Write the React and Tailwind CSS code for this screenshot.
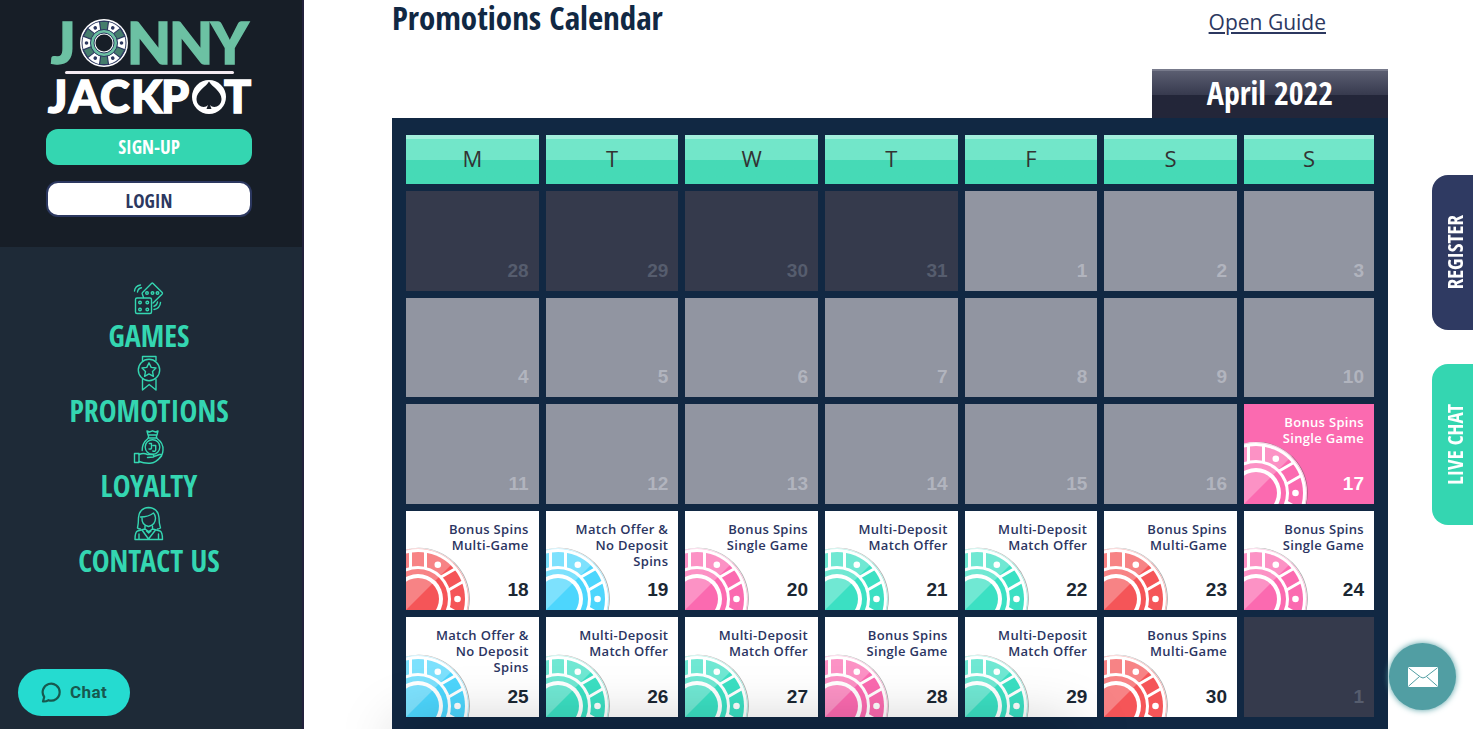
import React from 'react';

const CHIP_COLORS = {
  red: '#f55558',
  blue: '#4dd6fd',
  pink: '#fb6ab0',
  green: '#3be0c3',
};

const OFFERS = {
  single: { lines: ['Bonus Spins', 'Single Game'], chip: 'pink' },
  multi: { lines: ['Bonus Spins', 'Multi-Game'], chip: 'red' },
  match: { lines: ['Match Offer &', 'No Deposit', 'Spins'], chip: 'blue' },
  deposit: { lines: ['Multi-Deposit', 'Match Offer'], chip: 'green' },
};

const WEEKDAYS = ['M', 'T', 'W', 'T', 'F', 'S', 'S'];

const outside = n => ({ n, type: 'outside' });
const past = n => ({ n, type: 'past' });
const open = (n, offer) => ({ n, type: 'open', offer });

const WEEKS = [
  [outside(28), outside(29), outside(30), outside(31), past(1), past(2), past(3)],
  [past(4), past(5), past(6), past(7), past(8), past(9), past(10)],
  [past(11), past(12), past(13), past(14), past(15), past(16), { n: 17, type: 'today', offer: 'single' }],
  [open(18, 'multi'), open(19, 'match'), open(20, 'single'), open(21, 'deposit'), open(22, 'deposit'), open(23, 'multi'), open(24, 'single')],
  [open(25, 'match'), open(26, 'deposit'), open(27, 'deposit'), open(28, 'single'), open(29, 'deposit'), open(30, 'multi'), outside(1)],
];

const CELL_STYLES = {
  outside: 'bg-[#353a4c] text-[#565d6e]',
  past: 'bg-[#9195a1] text-[#b1b4be]',
  today: 'bg-[#fb6ab0] text-white',
  open: 'bg-white text-[#1b2733]',
};

function Chip({ color }) {
  const fill = CHIP_COLORS[color];
  return (
    <svg className="absolute bottom-0 left-0" width="66" height="66" viewBox="0 0 66 66" aria-hidden="true">
      {/* edge shadow */}
      <circle cx="12.8" cy="54.8" r="51" fill="#555" opacity="0.5" />
      <circle cx="12" cy="55" r="51" fill="#fff" />
      <circle cx="12" cy="55" r="50.6" fill={fill} opacity="0.6" />
      <circle cx="12" cy="55" r="50" fill="#fff" />
      <circle cx="12" cy="55" r="47" fill={fill} />
      {/* both sides of each solid block */}
      {[-30, 30, 90].map(a => (
        <path key={a} d="M42 47.500 H60 M42 62.500 H60" stroke="#fff" strokeWidth="3" transform={`rotate(${-a} 12 55)`} />
      ))}
      <circle cx="12" cy="55" r="33" fill="#fff" />
      <circle cx="12" cy="55" r="30" fill={fill} />
      <circle cx="12" cy="55" r="25" fill="#fff" />
      <circle cx="12" cy="55" r="21" fill={fill} />
      <circle cx="51.5" cy="55" r="3.3" fill="#fff" />
      <circle cx="31.8" cy="20.8" r="3.3" fill="#fff" />
      <path d="M0 66 L48 18 A51 51 0 0 0 0 5.5 Z" fill="#fff" opacity="0.27" />
    </svg>
  );
}

function DayCell({ day }) {
  const offer = day.offer && OFFERS[day.offer];
  return (
    <td className="p-0">
      <div className={`relative flex h-[99px] flex-col justify-between overflow-hidden px-2.5 pt-2.5 pb-2 text-right group-odd:h-[100px] ${CELL_STYLES[day.type]}`}>
        {offer && <Chip color={offer.chip} />}
        <p className={`relative font-["Open_Sans",sans-serif] text-[13px] leading-[16px] font-semibold tracking-wide ${day.type === 'today' ? 'text-white' : 'text-[#2b3562]'}`}>
          {offer && offer.lines.map(line => <span key={line} className="block">{line}</span>)}
        </p>
        <span className="relative text-[19px] leading-6 font-bold">{day.n}</span>
      </div>
    </td>
  );
}

function Logo() {
  return (
    <svg className="block w-full overflow-visible" viewBox="0 0 206 102" role="img" aria-label="Jonny Jackpot">
      <g fill="#6cc1a3" stroke="#6cc1a3" strokeWidth="1.5" fontFamily="Lato, sans-serif" fontWeight="900" fontSize="57">
        <text x="5" y="53">J</text>
        <text x="81" y="53">N</text>
        <text x="123" y="53">N</text>
        <text x="165" y="53">Y</text>
      </g>
      <circle cx="58" cy="32" r="24" fill="#fff" />
      <circle cx="58" cy="32" r="22.5" fill="#2c3860" />
      <circle cx="58" cy="32" r="17.5" fill="none" stroke="#fff" strokeWidth="8" />
      {[0, 60, 120, 180, 240, 300].map(a => (
        <g key={a} transform={`rotate(${a} 58 32)`}>
          <path d="M53.5 10.5 h9 l-1.2 8.5 h-6.6 z" fill="#457d6c" stroke="#2c3860" strokeWidth="1.2" />
          <circle cx="75.5" cy="32" r="1.8" fill="#2c3860" />
        </g>
      ))}
      <circle cx="58" cy="32" r="13.5" fill="#6cc1a3" stroke="#2c3860" strokeWidth="1" />
      <circle cx="58" cy="32" r="10" fill="#fff" stroke="#2c3860" strokeWidth="1" />
      <circle cx="58" cy="32" r="8.5" fill="#171e27" />
      <rect x="19" y="60" width="169" height="3" rx="1.5" fill="#f3eaf1" />
      <g fill="#fff" stroke="#fff" strokeWidth="1.5" fontFamily="Lato, sans-serif" fontWeight="900" fontSize="45">
        <text x="2" y="102">J</text>
        <text x="23" y="102">A</text>
        <text x="54" y="102">C</text>
        <text x="85" y="102">K</text>
        <text x="115" y="102">P</text>
        <text x="178" y="102">T</text>
      </g>
      <circle cx="163" cy="86" r="17" fill="#fff" />
      <path d="M163 70.500 C166 76 175.500 80 175.500 88 C175.500 96 167 98 164 94 L165.500 98 H160.500 L162 94 C159 98 150.500 96 150.500 88 C150.500 80 160 76 163 70.500 Z" fill="#171e27" />
    </svg>
  );
}

const iconProps = {
  fill: 'none',
  stroke: 'currentColor',
  strokeWidth: 1.4,
  strokeLinecap: 'round',
  strokeLinejoin: 'round',
  'aria-hidden': true,
};

function DiceIcon() {
  return (
    <svg width="36" height="36" viewBox="0 0 36 36" {...iconProps}>
      <path d="M12.500 17.500 L11.300 14 Q10.800 13.200 11.500 12.500 L20.500 3.500 Q21.300 2.700 22.100 3.500 L31.200 12.500 Q31.800 13.200 31.200 13.900 L22 23" />
      <rect x="4.500" y="18" width="16" height="15.500" rx="1.500" />
      <circle cx="16" cy="13" r="1.300" /><circle cx="21.500" cy="13" r="1.300" /><circle cx="26.500" cy="13" r="1.300" />
      <circle cx="9" cy="22.500" r="1.300" /><circle cx="16.300" cy="22.500" r="1.300" />
      <circle cx="9" cy="29.500" r="1.300" /><circle cx="16.300" cy="29.500" r="1.300" />
      <path d="M3.500 11 Q4 6 9.500 5 M6.500 12 Q7 8.500 10.500 7.800 M29.500 22.500 Q29 28.500 23 29.500 M26.500 22 Q26 25.500 23 26.300" />
    </svg>
  );
}

function MedalIcon() {
  return (
    <svg width="36" height="36" viewBox="0 0 36 36" {...iconProps}>
      <path d="M11.500 5.500 V1.500 H25 V5.500 M11.500 24.500 V35 L18.200 29.500 L25 35 V24.500" />
      <circle cx="18" cy="15" r="10.700" />
      <path d="M18 7.800 L20.200 12.400 L25 13 L21.500 16.400 L22.400 21.300 L18 18.900 L13.600 21.300 L14.500 16.400 L11 13 L15.800 12.400 Z" />
    </svg>
  );
}

function LoyaltyIcon() {
  return (
    <svg width="36" height="36" viewBox="0 0 36 36" {...iconProps}>
      <path d="M17 5 L16 1 L18.500 2 L21.500 .8 L24.500 2 L27 1 L26 5 Z M17.500 5 V8 M25.500 5 V8 M17 8 H26" />
      <path d="M17 8.500 Q11 13 11.200 20.500 M26 8.500 Q32.500 13 32 20 Q31.800 25 28.500 28" />
      <circle cx="21.500" cy="17" r="7.300" />
      <path d="M18.300 13.500 H20.500 V18 Q20.200 19.500 18 19 M22 15.500 H24.700 V20 Q24.200 22 21.800 21" />
      <rect x="3.500" y="23.500" width="4.500" height="9" />
      <path d="M8 24.500 Q12.500 22.500 16.500 24.500 H21.500 Q23.500 25 22.500 27 L16.500 27.500 M23 26.500 L28.500 24.500 Q31 24 30.500 26 Q25 33 19 33.200 Q13 33.500 8 31.500" />
    </svg>
  );
}

function ContactIcon() {
  return (
    <svg width="36" height="36" viewBox="0 0 36 36" {...iconProps}>
      <path d="M6.500 23 Q7.500 19 7.500 12.500 Q8.500 3 17.500 2.500 Q27 3 28 12.500 Q28 19 29.500 23 Q28 24 26.500 24 M6.500 23 Q7.500 24 9.500 24" />
      <path d="M11 13 Q10.500 20 17.500 21.500 Q24.500 20 24.500 13 Q24 9.500 22.500 8 Q17.500 12 9.500 12" />
      <path d="M14 21 V24 L17.800 26.500 L21.500 24 V21 M14 24 L6.500 26 Q4 27 4 34.500 H31.500 Q31.500 27 29 26 L21.500 24 M11 25 L17.500 34 L24.500 25 M8 29 V34 M27.500 29 V34 M15.500 26 L17.700 28 L20 26" />
    </svg>
  );
}

const NAV = [
  { label: 'GAMES', Icon: DiceIcon },
  { label: 'PROMOTIONS', Icon: MedalIcon },
  { label: 'LOYALTY', Icon: LoyaltyIcon },
  { label: 'CONTACT US', Icon: ContactIcon },
];

function Sidebar() {
  return (
    <aside className='w-[304px] shrink-0 border-r-2 border-[#22213c] bg-[#1e2a37] font-["Open_Sans_Condensed",sans-serif] font-bold'>
      <div className="flex flex-col gap-4 bg-[#171e27] pt-[11px] pr-[50px] pb-[30px] pl-[46px]">
        <Logo />
        <button className="h-9 rounded-xl bg-[#34d6b1] text-[19px] leading-9 text-white">SIGN-UP</button>
        <button className="h-9 rounded-xl border-2 border-[#2c3860] bg-white pt-1 text-[19px] leading-7 text-[#2c3860]">LOGIN</button>
      </div>
      <nav className="flex flex-col items-center pt-[33px] pr-1">
        {NAV.map(({ label, Icon }) => (
          <a key={label} href="#" className="flex flex-col items-center text-[#34d6b1]">
            <Icon />
            <span className="text-[30px] leading-[39px]">{label}</span>
          </a>
        ))}
      </nav>
    </aside>
  );
}

function Calendar() {
  return (
    <section className="flex flex-col">
      <h2 className='flex h-[49px] w-[236px] items-center justify-center self-end border-t-2 border-[#777a8b] bg-linear-to-b from-[#5b5e71] via-[#383b4f] via-50% to-[#232639] to-50% pb-1 font-["Open_Sans_Condensed",sans-serif] text-[32px] leading-10 font-bold text-white'>
        April 2022
      </h2>
      <div className="bg-[#112843] px-[7px] pt-2.5 pb-[5px]">
        <table className='w-full table-fixed border-separate border-spacing-[7px] font-["Liberation_Sans",Arial,sans-serif]'>
          <thead>
            <tr>
              {WEEKDAYS.map((d, i) => (
                <th key={i} scope="col" className='h-[49px] border-t-4 border-[#a3efdc] bg-linear-to-b from-[#72e6c9] from-46% to-[#46dab6] to-46% px-0 pt-0 pb-2 font-["Open_Sans",sans-serif] text-[22px] leading-none font-medium text-[#333] last:w-[130px]'>
                  {d}
                </th>
              ))}
            </tr>
          </thead>
          <tbody>
            {WEEKS.map((week, i) => (
              <tr key={i} className="group">
                {week.map(day => <DayCell key={day.n} day={day} />)}
              </tr>
            ))}
          </tbody>
        </table>
      </div>
    </section>
  );
}

export default function App() {
  return (
    <div className="flex min-h-screen bg-white">
      <Sidebar />
      <main className="min-w-0 flex-1 pr-[85px] pl-[88px]">
        <header className="flex h-[69px] items-start justify-between pr-[62px]">
          <h1 className='font-["Open_Sans_Condensed",sans-serif] text-[33px] leading-9 font-bold text-[#112843]'>Promotions Calendar</h1>
          <a href="#" className='pt-1.5 font-["Open_Sans",sans-serif] text-[21px] leading-8 text-[#2c3860] underline'>Open Guide</a>
        </header>
        <Calendar />
      </main>

      <div className="pointer-events-none fixed top-full right-[400px] left-[400px] h-10 shadow-[0_0_60px_rgba(0,0,0,0.28)]" />

      <div className='fixed top-[175px] right-0 flex flex-col gap-[34px] font-["Open_Sans_Condensed",sans-serif] text-[21px] font-bold text-white'>
        <button className="flex h-[155px] w-[41px] items-center justify-center rounded-l-2xl bg-[#2f3a62] pl-1">
          <span className="rotate-180 leading-6 [writing-mode:vertical-rl]">REGISTER</span>
        </button>
        <button className="flex h-[161px] w-[41px] items-center justify-center rounded-l-2xl bg-[#34d6b1] pl-1">
          <span className="rotate-180 leading-6 [writing-mode:vertical-rl]">LIVE CHAT</span>
        </button>
      </div>

      <button className='fixed bottom-[13px] left-[18px] flex h-[47px] w-28 items-center justify-center gap-2 rounded-full bg-[#25dbd0] font-["Roboto",sans-serif] text-[17px] font-bold tracking-wide text-[#17594f]'>
        <svg width="21" height="21" viewBox="0 0 21 21" fill="none" stroke="currentColor" strokeWidth="2.2" strokeLinejoin="round" aria-hidden="true">
          <path d="M2 19.500 L3.200 15 A8.500 8.500 0 1 1 7.500 18.200 Q5 19.700 2 19.500 Z" />
        </svg>
        Chat
      </button>

      <button aria-label="Send a message" className="fixed right-[17px] bottom-[19px] flex size-[67px] items-center justify-center rounded-full bg-[#519ea3] shadow-[0_0_6px_#519ea3]">
        <svg width="30" height="20" viewBox="0 0 30 20" aria-hidden="true">
          <rect width="30" height="20" rx="1" fill="#fff" />
          <path d="M.5 .8 L12.500 10 Q15 12 17.500 10 L29.500 .8 M.5 19.200 L11.500 9.500 M29.500 19.200 L18.500 9.500" fill="none" stroke="#519ea3" strokeWidth="1" />
        </svg>
      </button>
    </div>
  );
}
